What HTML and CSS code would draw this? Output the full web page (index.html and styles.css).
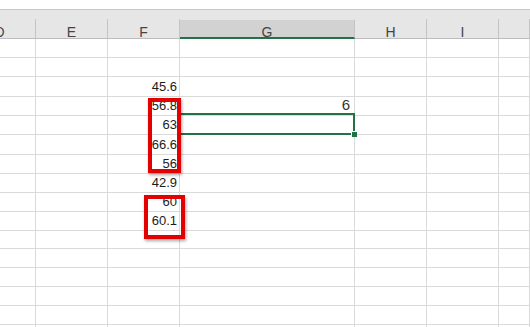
FILE: index.html
```html
<!DOCTYPE html>
<html>
<head>
<meta charset="utf-8">
<link rel="stylesheet" href="styles.css">
</head>
<body>
<div class="page">
  <div class="topgap"></div>
  <div class="band"></div>
  <div class="sheet">
    <div class="hrow">
      <div class="hc">D</div><div class="hc">E</div><div class="hc">F</div><div class="hc sel">G</div><div class="hc">H</div><div class="hc">I</div><div class="hc"></div>
    </div>
    <div class="row"><div class="c"></div><div class="c"></div><div class="c"></div><div class="c"></div><div class="c"></div><div class="c"></div><div class="c"></div></div>
    <div class="row"><div class="c"></div><div class="c"></div><div class="c"></div><div class="c"></div><div class="c"></div><div class="c"></div><div class="c"></div></div>
    <div class="row"><div class="c"></div><div class="c"></div><div class="c num">45.6</div><div class="c"></div><div class="c"></div><div class="c"></div><div class="c"></div></div>
    <div class="row"><div class="c"></div><div class="c"></div><div class="c num">56.8</div><div class="c big">6</div><div class="c"></div><div class="c"></div><div class="c"></div></div>
    <div class="row tall"><div class="c"></div><div class="c"></div><div class="c num">63</div><div class="c"></div><div class="c"></div><div class="c"></div><div class="c"></div></div>
    <div class="row"><div class="c"></div><div class="c"></div><div class="c num">66.6</div><div class="c"></div><div class="c"></div><div class="c"></div><div class="c"></div></div>
    <div class="row"><div class="c"></div><div class="c"></div><div class="c num">56</div><div class="c"></div><div class="c"></div><div class="c"></div><div class="c"></div></div>
    <div class="row"><div class="c"></div><div class="c"></div><div class="c num">42.9</div><div class="c"></div><div class="c"></div><div class="c"></div><div class="c"></div></div>
    <div class="row"><div class="c"></div><div class="c"></div><div class="c num">60</div><div class="c"></div><div class="c"></div><div class="c"></div><div class="c"></div></div>
    <div class="row"><div class="c"></div><div class="c"></div><div class="c num">60.1</div><div class="c"></div><div class="c"></div><div class="c"></div><div class="c"></div></div>
    <div class="row"><div class="c"></div><div class="c"></div><div class="c"></div><div class="c"></div><div class="c"></div><div class="c"></div><div class="c"></div></div>
    <div class="row"><div class="c"></div><div class="c"></div><div class="c"></div><div class="c"></div><div class="c"></div><div class="c"></div><div class="c"></div></div>
    <div class="row"><div class="c"></div><div class="c"></div><div class="c"></div><div class="c"></div><div class="c"></div><div class="c"></div><div class="c"></div></div>
    <div class="row"><div class="c"></div><div class="c"></div><div class="c"></div><div class="c"></div><div class="c"></div><div class="c"></div><div class="c"></div></div>
    <div class="row"><div class="c"></div><div class="c"></div><div class="c"></div><div class="c"></div><div class="c"></div><div class="c"></div><div class="c"></div></div>
    <div class="row"><div class="c"></div><div class="c"></div><div class="c"></div><div class="c"></div><div class="c"></div><div class="c"></div><div class="c"></div></div>
  </div>
  <div class="selection"><span class="handle"></span></div>
  <div class="mark mark1"></div>
  <div class="mark mark2"></div>
</div>
</body>
</html>
```
FILE: styles.css
```css
html, body {
  margin: 0;
  padding: 0;
  background: #ffffff;
  overflow: hidden;
}
.page {
  position: relative;
  width: 530px;
  height: 327px;
  overflow: hidden;
  font-family: "Liberation Sans", Arial, sans-serif;
}
.topgap {
  height: 9px;
  background: #ffffff;
}
.band {
  height: 9px;
  border-top: 1px solid #c8c8c8;
  background: #e6e6e6;
}
.sheet {
  margin-left: -36px;
  width: 566px;
}
.hrow, .row {
  display: grid;
  grid-template-columns: 72px 72px 72px 175px 72px 72px 1fr;
}
.hrow {
  height: 20px;
  background: #e6e6e6;
}
.hc {
  box-sizing: border-box;
  height: 20px;
  border-right: 1px solid #c4c4c4;
  border-bottom: 1px solid #bcbcbc;
  text-align: center;
  font-size: 14px;
  line-height: 16px;
  padding-top: 5px;
  color: #444444;
}
.hc.sel {
  background: #d2d2d2;
  border-bottom: 2px solid #217346;
  border-top: 1px solid #e6e6e6;
  padding-top: 4px;
}
.row {
  height: 19px;
}
.row.tall {
  height: 20px;
}
.c {
  box-sizing: border-box;
  border-right: 1px solid #dadada;
  border-bottom: 1px solid #dadada;
  color: #1c1c1c;
  overflow: visible;
  white-space: nowrap;
}
.num {
  text-align: right;
  padding-right: 2px;
  padding-top: 1px;
  font-size: 13px;
  line-height: 18px;
}
.big {
  text-align: right;
  padding-right: 4px;
  font-size: 15px;
  line-height: 18px;
  color: #333333;
}
.selection {
  position: absolute;
  left: 179px;
  top: 113px;
  width: 176px;
  height: 22px;
  box-sizing: border-box;
  border: 2px solid #217346;
}
.handle {
  position: absolute;
  right: -4px;
  bottom: -4px;
  width: 5px;
  height: 5px;
  background: #217346;
  border-left: 1px solid #ffffff;
  border-top: 1px solid #ffffff;
}
.mark {
  position: absolute;
  box-sizing: border-box;
  border: 4px solid #e30000;
  box-shadow: 1px 2px 3px rgba(0, 0, 0, 0.35);
}
.mark1 {
  left: 148px;
  top: 98px;
  width: 33px;
  height: 75px;
}
.mark2 {
  left: 144px;
  top: 195px;
  width: 41px;
  height: 44px;
}
```
